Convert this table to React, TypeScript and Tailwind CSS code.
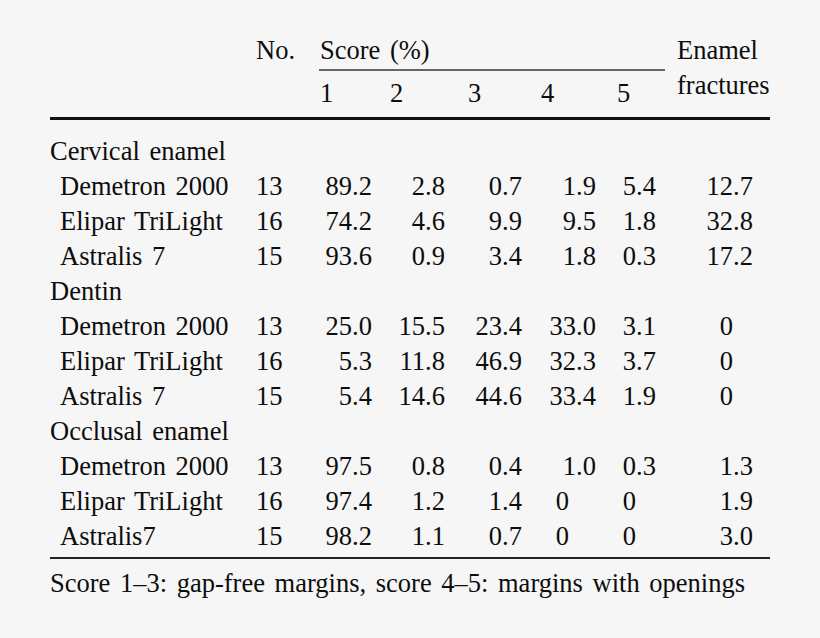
const groups = [
  {
    name: 'Cervical enamel',
    rows: [
      ['Demetron 2000', '13', '89.2', '2.8', '0.7', '1.9', '5.4', '12.7'],
      ['Elipar TriLight', '16', '74.2', '4.6', '9.9', '9.5', '1.8', '32.8'],
      ['Astralis 7', '15', '93.6', '0.9', '3.4', '1.8', '0.3', '17.2'],
    ],
  },
  {
    name: 'Dentin',
    rows: [
      ['Demetron 2000', '13', '25.0', '15.5', '23.4', '33.0', '3.1', '0'],
      ['Elipar TriLight', '16', '5.3', '11.8', '46.9', '32.3', '3.7', '0'],
      ['Astralis 7', '15', '5.4', '14.6', '44.6', '33.4', '1.9', '0'],
    ],
  },
  {
    name: 'Occlusal enamel',
    rows: [
      ['Demetron 2000', '13', '97.5', '0.8', '0.4', '1.0', '0.3', '1.3'],
      ['Elipar TriLight', '16', '97.4', '1.2', '1.4', '0', '0', '1.9'],
      ['Astralis7', '15', '98.2', '1.1', '0.7', '0', '0', '3.0'],
    ],
  },
];

// column box widths and where the integer part ends inside each box
const cols = [
  { box: 'w-[66px]', int: 'w-[33px]' },
  { box: 'w-[77px]', int: 'w-[40px]' },
  { box: 'w-[74px]', int: 'w-[40px]' },
  { box: 'w-[74px]', int: 'w-[40px]' },
  { box: 'w-[58px]', int: 'w-[26px]' },
  { box: 'w-[102px]', int: 'w-[65px]' },
];

function Num({ value, col }: { value: string; col: number }) {
  const [whole, frac] = value.split('.');
  // bare zeros in column 4 sit a little left of the decimal line
  const nudge = frac === undefined && col === 3 ? 'pr-[7px]' : '';
  return (
    <div className={`${cols[col].box} flex`}>
      <span className={`${cols[col].int} text-right ${nudge}`}>{whole}</span>
      <span>{frac !== undefined ? '.' + frac : ''}</span>
    </div>
  );
}

export default function App() {
  return (
    <div
      className="w-[820px] h-[638px] bg-[#f6f6f6] text-[#0d0d0d] pt-[33px] pl-[50px] text-[26.5px] leading-[35px] [word-spacing:3px]"
      style={{ fontFamily: '"Liberation Serif", "Times New Roman", serif' }}
    >
      <div className="w-[720px]">
        {/* header */}
        <div className="flex">
          <div className="w-[206px]" />
          <div className="w-[63px]">No.</div>
          <div className="w-[349px] flex flex-col">
            <div className="h-[35px] pl-[1px]">Score (%)</div>
            <div className="mt-[1px] border-t-2 border-[#666] w-[346px]" />
            <div className="mt-[5px] flex h-[35px]">
              <div className="w-[66px] pl-[1px]">1</div>
              <div className="w-[77px] pl-[5px]">2</div>
              <div className="w-[74px] pl-[6px]">3</div>
              <div className="w-[74px] pl-[5px]">4</div>
              <div className="w-[58px] pl-[7px]">5</div>
            </div>
          </div>
          <div className="w-[102px] pl-[9px]">
            <div>Enamel</div>
            <div>fractures</div>
          </div>
        </div>
        <div className="mt-[6px] border-t-[3px] border-[#111]" />

        {/* body */}
        <div className="mt-[14px]">
          {groups.map((g) => (
            <div key={g.name}>
              <div className="h-[35px]">{g.name}</div>
              {g.rows.map((r) => (
                <div key={r[0]} className="flex h-[35px]">
                  <div className="w-[206px] pl-[10px]">{r[0]}</div>
                  <div className="w-[63px]">{r[1]}</div>
                  {r.slice(2).map((v, i) => (
                    <Num key={i} value={v} col={i} />
                  ))}
                </div>
              ))}
            </div>
          ))}
        </div>
        <div className="mt-[3px] border-t-2 border-[#222]" />
        <div className="mt-[7px] whitespace-nowrap">
          Score 1–3: gap-free margins, score 4–5: margins with openings
        </div>
      </div>
    </div>
  );
}
